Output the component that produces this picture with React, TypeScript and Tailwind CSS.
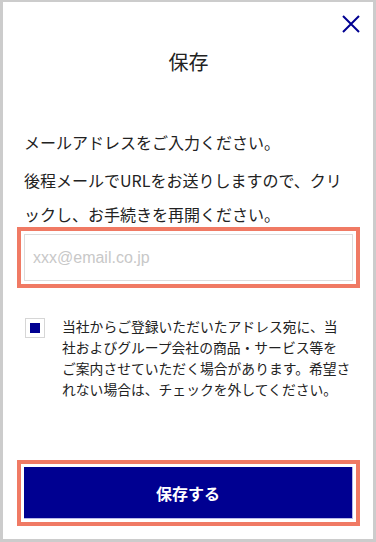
import { useState } from "react";

export default function App() {
  const [email, setEmail] = useState("");
  const [agree, setAgree] = useState(true);

  return (
    <div className="w-[376px] h-[542px] bg-white border-[#cccccc] border-l-[3px] border-r-[3px] border-t-2 border-b-[3px] font-['Noto_Sans_CJK_JP','Noto_Sans',sans-serif] text-[#222222]">
      <div className="flex h-full flex-col pl-[21px] pr-[20px] pb-[20px]">
        <div className="flex justify-end pt-[11px] -mr-[9px]">
          <button aria-label="閉じる" className="flex h-[22px] w-[22px] items-center justify-center text-[#000091]">
            <svg width="20" height="20" viewBox="0 0 20 20" fill="none" stroke="currentColor" strokeWidth="2">
              <path d="M2 2 L18 18 M18 2 L2 18" />
            </svg>
          </button>
        </div>

        <h2 className="mt-[13px] text-center text-[20px] leading-[28px] font-normal">保存</h2>

        <p className="mt-[49px] text-[16px] leading-[34px]">メールアドレスをご入力ください。</p>
        <p className="mt-[4px] text-[16px] leading-[34px] whitespace-nowrap">
          後程メールでURLをお送りしますので、クリ
          <br />
          ックし、お手続きを再開ください。
        </p>

        <input
          type="email"
          value={email}
          onChange={e => setEmail(e.target.value)}
          placeholder="xxx@email.co.jp"
          className="mt-[3px] h-[47px] w-full border border-[#dddddd] px-[8px] font-['Liberation_Sans',Arial,sans-serif] text-[16px] text-[#222222] placeholder:text-[#c8c8c8] outline-4 outline-[#f07a64] outline-offset-[3px]"
        />

        <label className="mt-[35px] flex items-start gap-[17px]">
          <input type="checkbox" className="sr-only" checked={agree} onChange={() => setAgree(!agree)} />
          <span className="ml-[1px] mt-[2px] flex h-[20px] w-[20px] shrink-0 items-center justify-center border border-[#d6d6d6] bg-white">
            {agree && <span className="h-[10px] w-[10px] bg-[#000091]" />}
          </span>
          <span className="text-[13.8px] leading-[21px] whitespace-nowrap">
            当社からご登録いただいたアドレス宛に、当
            <br />
            社およびグループ会社の商品・サービス等を
            <br />
            ご案内させていただく場合があります。希望さ
            <br />
            れない場合は、チェックを外してください。
          </span>
        </label>

        <button className="mt-auto h-[52px] w-full bg-[#000091] border-r border-b border-[#b8b8e8] text-[16px] font-bold text-white outline-4 outline-[#f07a64] outline-offset-[3px]">
          保存する
        </button>
      </div>
    </div>
  );
}
